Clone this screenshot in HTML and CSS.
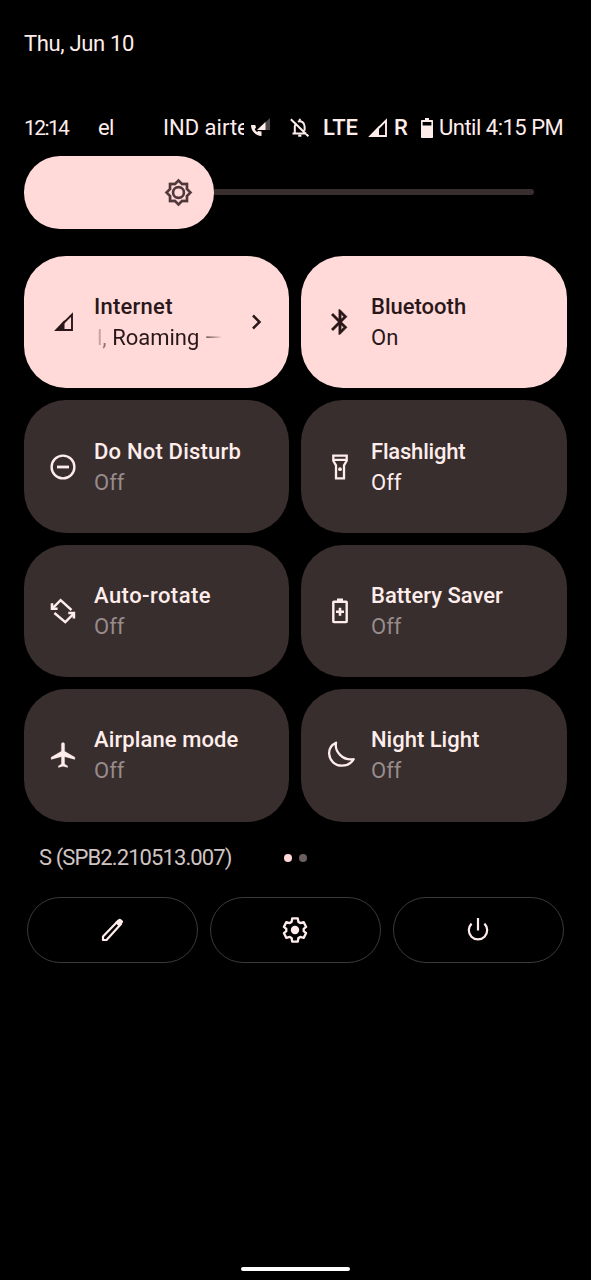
FILE: index.html
```html
<!DOCTYPE html>
<html lang="en">

<head>
    <meta charset="UTF-8">
    <meta name="viewport" content="width=device-width, initial-scale=1.0">
    <title>Quick Settings</title>
    <link rel="stylesheet" href="styles.css">
</head>

<body>
    <div class="panel">
        <div class="date">Thu, Jun 10</div>

        <div class="status">
            <span class="clock">12:14</span>
            <span class="carrier-end">el</span>
            <span class="carrier">IND airte</span>
            <svg width="22" height="22" viewBox="0 0 22 22">
                <path d="M7 13L20 1v12z" fill="#4c4748" />
                <path d="M7 13L15.500 5v8z" fill="#ffedec" />
                <path d="M1 8c0 6.200 4.500 10.500 10.500 11v-4.500l-3.200-.6-1.300 1.200C5.900 14.300 5.200 13.300 4.700 12L6 10.800 5.300 8z" fill="#ffedec" />
            </svg>
            <svg width="22" height="22" viewBox="0 0 22 22" fill="none" stroke="#ffedec" stroke-width="2">
                <path d="M2.500 16.500h14M4.800 16V9.500c0-1.500.5-2.700 1.400-3.700M7.800 4.600c3.500-1.300 6.800 1.200 6.800 4.900v4.300M9.800 1.800v2M8.200 18.700h3.200M.8 2.300l17.600 17" />
            </svg>
            <span class="lte">LTE</span>
            <svg width="20" height="20" viewBox="0 0 20 20">
                <path d="M2.500 18L18 2.500V18z" fill="none" stroke="#ffedec" stroke-width="1.900" />
                <path d="M1 18.900L11 8v10.900z" fill="#ffedec" />
            </svg>
            <span class="roam">R</span>
            <svg width="12" height="20" viewBox="0 0 12 20">
                <path d="M4 0h4v2h3c.6 0 1 .4 1 1v16c0 .6-.4 1-1 1H1c-.6 0-1-.4-1-1V3c0-.6.4-1 1-1h3z" fill="#ffedec" />
                <path d="M1.600 4h8.800v3.500H1.600z" fill="#000" />
            </svg>
            <span class="until">Until 4:15 PM</span>
        </div>

        <div class="brightness">
            <div class="level">
                <svg width="29" height="29" viewBox="0 0 24 24" fill="#50393b" stroke="#50393b">
                    <path d="M20 8.690V4h-4.690L12 .69 8.690 4H4v4.690L.69 12 4 15.310V20h4.690L12 23.310 15.310 20H20v-4.690L23.310 12 20 8.690zM18 14.480V18h-3.520L12 20.480 9.520 18H6v-3.520L3.520 12 6 9.520V6h3.520L12 3.520 14.480 6H18v3.520L20.480 12 18 14.480z" stroke-width=".2" />
                    <circle cx="12" cy="12" r="4.500" fill="none" stroke-width="2.200" />
                </svg>
            </div>
            <div class="track"></div>
        </div>

        <div class="tiles">
            <div class="tile on">
                <svg class="icon" viewBox="0 0 30 30">
                    <path d="M8.500 23L24 7.500V23z" fill="none" stroke="currentColor" stroke-width="1.900" />
                    <path d="M6.500 23.950L16.500 13v10.950z" fill="currentColor" />
                </svg>
                <div class="label">
                    <div class="name internet">Internet</div>
                    <div class="state marquee">l, Roaming —</div>
                </div>
                <svg class="arrow" width="12" height="18" viewBox="0 0 12 18" fill="none" stroke="currentColor" stroke-width="2.500">
                    <path d="M2 2.500l6.500 6.500L2 15.500" />
                </svg>
            </div>
            <div class="tile on">
                <svg class="icon" viewBox="0 0 24 24" fill="currentColor" stroke="currentColor" stroke-width=".3">
                    <path d="M17.710 7.710L12 2h-1v7.590L6.410 5 5 6.410 10.590 12 5 17.590 6.410 19 11 14.410V22h1l5.710-5.710-4.300-4.290 4.300-4.290zM13 5.830l1.880 1.880L13 9.590V5.830zm1.880 10.460L13 18.170v-3.760l1.880 1.880z" />
                </svg>
                <div class="label">
                    <div class="name bluetooth">Bluetooth</div>
                    <div class="state">On</div>
                </div>
            </div>
            <div class="tile">
                <svg class="icon" viewBox="0 0 30 30" fill="none" stroke="currentColor" stroke-width="2.400">
                    <circle cx="15" cy="15" r="11.400" />
                    <path d="M9 15h12" stroke-width="2.800" />
                </svg>
                <div class="label">
                    <div class="name dnd">Do Not Disturb</div>
                    <div class="state dim">Off</div>
                </div>
            </div>
            <div class="tile">
                <svg class="icon" viewBox="0 0 30 30" fill="none" stroke="currentColor" stroke-width="2.300">
                    <path d="M8.300 3.600h13.400v5.200l-2.700 4.500v13h-8v-13L8.300 8.800zM8.300 7.900h13.400" />
                    <circle cx="15" cy="17.200" r="1.900" fill="currentColor" stroke="none" />
                </svg>
                <div class="label">
                    <div class="name flash">Flashlight</div>
                    <div class="state">Off</div>
                </div>
            </div>
            <div class="tile">
                <svg class="icon" viewBox="0 0 30 30" fill="none" stroke="currentColor" stroke-width="2.400">
                    <path d="M4.500 12.300l8.100-8.100L23.500 14M6.400 17l10.900 9.200 8.200-8.300" />
                    <path d="M4 7.300v5.500h5.600M20.300 17h5.600v5.400" stroke-width="2.600" />
                </svg>
                <div class="label">
                    <div class="name rotate">Auto-rotate</div>
                    <div class="state dim">Off</div>
                </div>
            </div>
            <div class="tile">
                <svg class="icon" viewBox="0 0 30 30" fill="none" stroke="currentColor" stroke-width="2.400">
                    <rect x="8.300" y="5.700" width="13.400" height="20.400" rx=".6" />
                    <path d="M12 3.800h6M15 11.800v8M11 15.800h8" stroke-width="2.600" />
                </svg>
                <div class="label">
                    <div class="name battery">Battery Saver</div>
                    <div class="state dim">Off</div>
                </div>
            </div>
            <div class="tile">
                <svg class="icon" viewBox="0 0 24 24" fill="currentColor" stroke="currentColor" stroke-width=".2">
                    <path d="M21.500 15.500v-1.800L13.300 9V3.300c0-.8-.6-1.400-1.300-1.400s-1.300.6-1.300 1.400V9l-8.200 4.700v1.800l8.200-2.200v5.900l-2.400 1.500V22l3.700-1 3.700 1v-1.300l-2.400-1.500v-5.900z" />
                </svg>
                <div class="label">
                    <div class="name airplane">Airplane mode</div>
                    <div class="state dim">Off</div>
                </div>
            </div>
            <div class="tile">
                <svg class="icon" viewBox="0 0 30 30" fill="none" stroke="currentColor" stroke-width="2.300" stroke-linejoin="round">
                    <path d="M11 2.700C6.100 5 3.800 9.300 4.200 14c.5 6.800 5.800 11.700 12.500 11.700 5.100 0 9.500-2.400 12-6.500-5.400.8-10.300-.8-13.900-4.600-3.300-3.500-4.600-7.600-3.800-11.900z" />
                </svg>
                <div class="label">
                    <div class="name night">Night Light</div>
                    <div class="state dim">Off</div>
                </div>
            </div>
        </div>

        <div class="info">
            <span class="build">S (SPB2.210513.007)</span>
            <span class="dot current"></span>
            <span class="dot"></span>
        </div>

        <div class="actions">
            <div class="action">
                <svg width="28" height="28" viewBox="0 0 28 28" fill="none" stroke="#ffedec" stroke-width="2.200">
                    <path d="M5 24v-3.500L20 5l3 3L8.500 24z" stroke-linejoin="round" />
                    <path d="M17 6.500l3.500-3.300c.7-.7 1.800-.7 2.500 0l1.500 1.400c.7.700.7 1.800 0 2.500L21 10.600z" fill="#ffedec" stroke="none" />
                </svg>
            </div>
            <div class="action">
                <svg width="28" height="28" viewBox="0 0 24 24" fill="none" stroke="#ffedec" stroke-width="2">
                    <path d="M19.430 12.980c.04-.32.07-.64.07-.98s-.03-.66-.07-.98l2.110-1.650-2.120-4.100-2.860.78c-.52-.4-1.080-.73-1.690-.98L14.400 2H9.600l-.47 3.070c-.61.25-1.170.59-1.690.98l-2.860-.78-2.120 4.100 2.110 1.650c-.04.32-.07.65-.07.98s.03.66.07.98l-2.110 1.650 2.120 4.100 2.860-.78c.52.4 1.080.73 1.690.98L9.600 22h4.800l.47-3.070c.61-.25 1.170-.59 1.690-.98l2.860.78 2.120-4.100z" stroke-linejoin="round" />
                    <circle cx="12" cy="12" r="3.600" fill="#ffedec" stroke="none" />
                </svg>
            </div>
            <div class="action">
                <svg width="28" height="28" viewBox="0 0 28 28" fill="none" stroke="#ffedec" stroke-width="2.200">
                    <path d="M14 2v12.500M7.600 7.600a9.200 9.200 0 1 0 12.800 0" />
                </svg>
            </div>
        </div>

        <div class="handle"></div>
    </div>
</body>

</html>
```
FILE: styles.css
```css
* {
    box-sizing: border-box;
    padding: 0;
    margin: 0;
}

body {
    background-color: #000;
    color: #ffedec;
    font: 22px Roboto, sans-serif;
}

svg {
    display: block;
    flex: none;
}

.panel {
    display: flex;
    flex-direction: column;
    width: 591px;
    height: 1280px;
    padding: 29px 24px 9px;
    overflow: hidden;
}

.date {
    height: 30px;
    line-height: 30px;
    letter-spacing: -0.35px;
}

.status {
    display: grid;
    grid-template-columns: 74px 65px 87px 40px 33px 45px 26px 27px 18px 130px;
    align-items: center;
    height: 30px;
    margin-top: 54px;
    line-height: 30px;
    white-space: nowrap;
}

.clock {
    font-size: 21px;
    letter-spacing: -1.6px;
}

.carrier-end {
    letter-spacing: -0.7px;
}

.carrier {
    width: 81px;
    overflow: hidden;
}

.lte,
.roam {
    font-weight: 500;
}

.until {
    letter-spacing: -0.5px;
}

.brightness {
    display: flex;
    align-items: center;
    height: 73px;
    margin-top: 13px;
}

.level {
    display: flex;
    align-items: center;
    justify-content: flex-end;
    width: 190px;
    height: 73px;
    padding-right: 21px;
    border-radius: 36px;
    background-color: #ffdad9;
}

.track {
    width: 320px;
    height: 6px;
    margin-bottom: 1px;
    border-radius: 0 3px 3px 0;
    background-color: #382e2d;
}

.tiles {
    display: grid;
    grid-template-columns: 265px 266px;
    grid-auto-rows: 132.4px;
    gap: 12px;
    margin-top: 27px;
}

.tile {
    display: flex;
    align-items: center;
    padding-left: 24px;
    border-radius: 42px;
    background-color: #382e2d;
}

.tile.on {
    background-color: #ffdad9;
    color: #2a1719;
}

.icon {
    width: 30px;
    height: 30px;
}

.label {
    width: 130px;
    margin-left: 16px;
    line-height: 31px;
    white-space: nowrap;
}

.name {
    font-weight: 500;
}

.internet {
    letter-spacing: 0.25px;
}

.dnd {
    letter-spacing: 0.2px;
}

.flash {
    letter-spacing: -0.2px;
}

.rotate {
    letter-spacing: 0.45px;
}

.airplane {
    letter-spacing: 0.1px;
}

.dim {
    color: #978c8b;
}

.marquee {
    width: 129px;
    padding-left: 3px;
    overflow: hidden;
    -webkit-mask-image: linear-gradient(to right, transparent, #000 20px, #000 104px, transparent);
    mask-image: linear-gradient(to right, transparent, #000 20px, #000 104px, transparent);
}

.arrow {
    margin-left: 27px;
}

.info {
    display: flex;
    align-items: center;
    height: 30px;
    margin-top: 21px;
    padding-left: 15px;
    color: #d0c4c3;
}

.build {
    width: 245px;
    letter-spacing: -0.9px;
}

.dot {
    width: 8px;
    height: 8px;
    margin-right: 6.5px;
    border-radius: 50%;
    background-color: #6b5f5f;
}

.dot.current {
    background-color: #ffdad9;
}

.actions {
    display: grid;
    grid-template-columns: repeat(3, 171px);
    gap: 12px;
    margin: 24px 0 0 3px;
}

.action {
    display: flex;
    align-items: center;
    justify-content: center;
    height: 66px;
    padding-right: 1px;
    border: 1px solid #3a3a3a;
    border-radius: 33px;
}

.handle {
    width: 109px;
    height: 4px;
    margin: auto auto 0;
    border-radius: 2px;
    background-color: #fff;
}
```
